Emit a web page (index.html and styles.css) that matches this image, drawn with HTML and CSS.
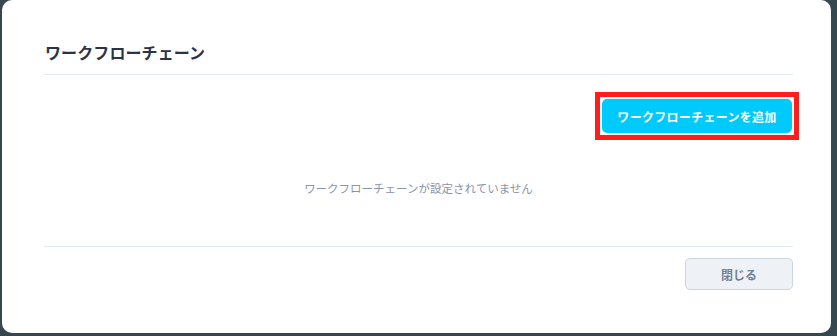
FILE: index.html
```html
<!DOCTYPE html>
<html lang="ja">
<head>
  <meta charset="UTF-8">
  <meta name="viewport" content="width=device-width, initial-scale=1.0">
  <title>ワークフローチェーン</title>
  <link rel="stylesheet" href="styles.css">
</head>
<body>
  <div class="modal">
    <div class="modal-header">
      <h2>ワークフローチェーン</h2>
    </div>
    <div class="modal-body">
      <div class="actions">
        <span class="highlight">
          <button class="btn-add">ワークフローチェーンを追加</button>
        </span>
      </div>
      <p class="empty">ワークフローチェーンが設定されていません</p>
    </div>
    <div class="modal-footer">
      <button class="btn-close">閉じる</button>
    </div>
  </div>
</body>
</html>
```
FILE: styles.css
```css
body {
  margin: 0;
  background: #37474f;
  font-family: "Noto Sans CJK JP", "Noto Sans", sans-serif;
  height: 336px;
  overflow: hidden;
}
.modal {
  margin: 0 6px 0 2px;
  height: 333px;
  background: #fff;
  border-radius: 10px;
  padding: 0 38px 0 42px;
  box-sizing: border-box;
}
.modal-header {
  padding: 40px 0 10px 1px;
  border-bottom: 1px solid #e2e8f0;
}
.modal-header h2 {
  margin: 0;
  font-size: 16px;
  line-height: 24px;
  font-weight: 700;
  letter-spacing: 0.1px;
  color: #2b3447;
}
.modal-body {
  padding-top: 24px;
  border-bottom: 1px solid #e2e8f0;
}
.actions {
  display: flex;
  justify-content: flex-end;
  padding-right: 1px;
}
.highlight {
  display: flex;
  margin: -7px;
  padding: 2px;
  border: 5px solid #ff1d1d;
}
.btn-add {
  font-family: inherit;
  height: 34px;
  width: 190px;
  background: #00cafc;
  color: #fff;
  border: none;
  border-radius: 5px;
  font-size: 12px;
  font-weight: 700;
  letter-spacing: 0.3px;
  cursor: pointer;
}
.empty {
  margin: 46px 0 0;
  padding-bottom: 49px;
  text-align: center;
  font-size: 11.5px;
  line-height: 18px;
  color: #8b93a7;
}
.modal-footer {
  display: flex;
  justify-content: flex-end;
  padding-top: 11px;
}
.btn-close {
  font-family: inherit;
  width: 108px;
  height: 32px;
  background: #eef2f6;
  border: 1px solid #cbd5e0;
  border-radius: 5px;
  color: #718096;
  font-size: 12px;
  font-weight: 700;
  cursor: pointer;
}
```
